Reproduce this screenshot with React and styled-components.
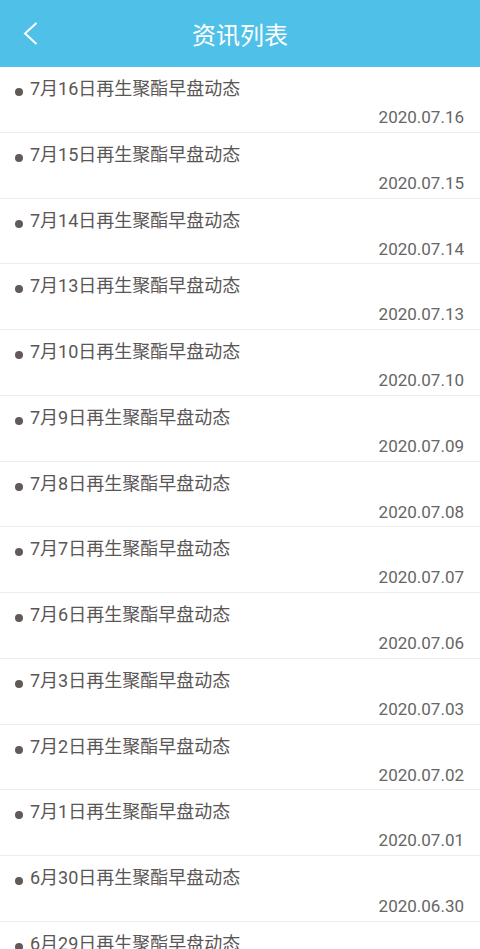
import React from "react";
import styled, { createGlobalStyle } from "styled-components";

const GlobalStyle = createGlobalStyle`
  body {
    margin: 0;
    background: #fff;
    font-family: Roboto, "Noto Sans CJK SC", sans-serif;
  }
`;

const Header = styled.div`
  height: 67px;
  background-color: #4fc0e7;
  display: flex;
  align-items: center;
  justify-content: center;
  position: relative;
`;

const BackButton = styled.div`
  position: absolute;
  left: 23px;
  top: 22px;
  width: 15px;
  height: 23px;
  display: flex;
  align-items: center;
  justify-content: center;
`;

const Title = styled.h1`
  margin: 0;
  font-size: 24px;
  font-weight: 400;
  color: #fff;
`;

const List = styled.ul`
  list-style: none;
  margin: 0;
  padding: 0;
`;

const Row = styled.li`
  box-sizing: border-box;
  height: 65.77px;
  padding: 10px 16px 0 15px;
  border-bottom: 1px solid #ececec;
  display: flex;
  flex-direction: column;
`;

const NewsTitle = styled.div`
  display: flex;
  align-items: center;
  font-size: 18px;
  line-height: 24px;
  color: #5a5656;
`;

const Dot = styled.span`
  width: 8px;
  height: 8px;
  border-radius: 50%;
  background: #625959;
  margin: 6px 7px 0 0;
  flex-shrink: 0;
`;

const NewsDate = styled.div`
  margin-top: 6px;
  align-self: flex-end;
  font-size: 17px;
  line-height: 20px;
  color: #666;
`;

const news = [
  ["7月16日", "2020.07.16"],
  ["7月15日", "2020.07.15"],
  ["7月14日", "2020.07.14"],
  ["7月13日", "2020.07.13"],
  ["7月10日", "2020.07.10"],
  ["7月9日", "2020.07.09"],
  ["7月8日", "2020.07.08"],
  ["7月7日", "2020.07.07"],
  ["7月6日", "2020.07.06"],
  ["7月3日", "2020.07.03"],
  ["7月2日", "2020.07.02"],
  ["7月1日", "2020.07.01"],
  ["6月30日", "2020.06.30"],
  ["6月29日", "2020.06.29"],
];

function App() {
  return (
    <>
      <GlobalStyle />
      <Header>
        <BackButton>
          <svg width="15" height="23" viewBox="0 0 15 23">
            <path d="M13.5 1 L2 11.5 L13.5 22" fill="none" stroke="#fff" strokeWidth="2" />
          </svg>
        </BackButton>
        <Title>资讯列表</Title>
      </Header>
      <List>
        {news.map(([day, date]) => (
          <Row key={date}>
            <NewsTitle>
              <Dot />
              {day}再生聚酯早盘动态
            </NewsTitle>
            <NewsDate>{date}</NewsDate>
          </Row>
        ))}
      </List>
    </>
  );
}

export default App;
